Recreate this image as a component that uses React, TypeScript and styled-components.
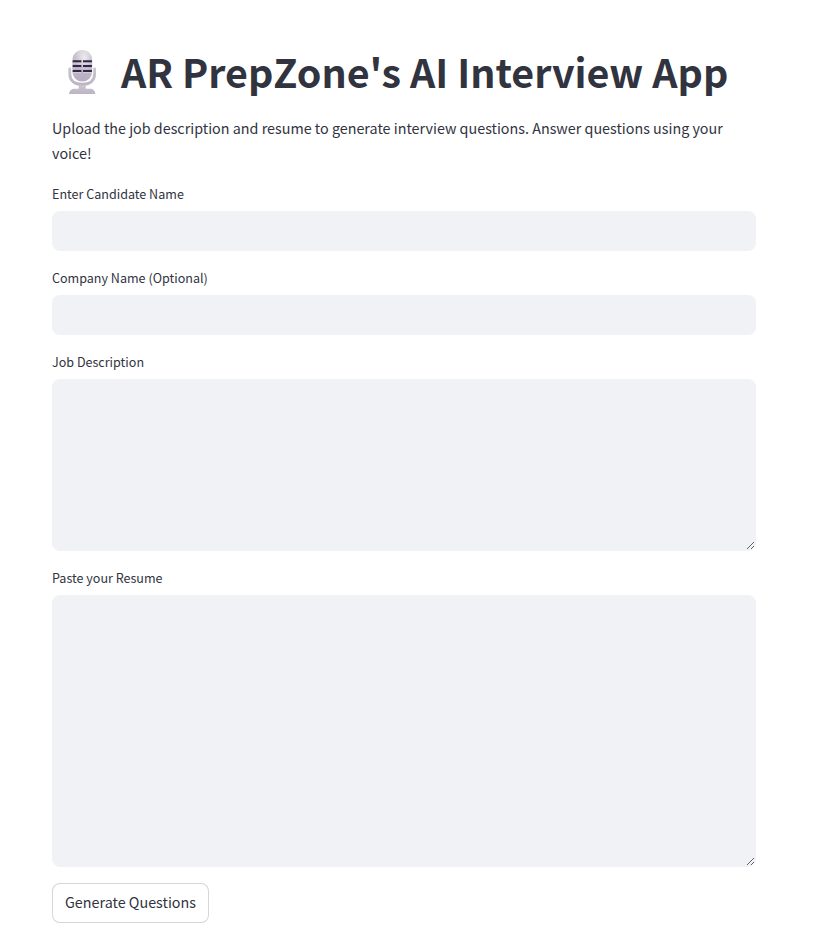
import React from 'react';
import styled, { createGlobalStyle } from 'styled-components';

const GlobalStyle = createGlobalStyle`
  * { box-sizing: border-box; }
  body {
    margin: 0;
    background: #fff;
    color: #31333f;
    font-family: "Noto Sans CJK SC", "Noto Sans", sans-serif;
  }
`;

const Page = styled.main`
  display: flex;
  flex-direction: column;
  align-items: flex-start;
  gap: 16px;
  width: 704px;
  height: 936px;
  margin-left: 52px;
  padding-top: 48px;
  overflow: hidden;
`;

const Title = styled.h1`
  display: flex;
  height: 51px;
  margin: 0;
  font-size: 39.42px;
  font-weight: 700;
  line-height: 46px;
  white-space: nowrap;
`;

const Microphone = styled.svg`
  flex: none;
  width: 60px;
  height: 48px;
  margin-right: 9px;
`;

const Intro = styled.p`
  height: 52px;
  margin: 0;
  font-size: 14.34px;
  line-height: 25px;
`;

const Field = styled.label`
  display: flex;
  flex-direction: column;
  gap: 4px;
  width: 100%;
`;

const Caption = styled.span`
  height: 24px;
  font-size: 12.55px;
  line-height: 22px;
`;

const TextInput = styled.input`
  height: 40px;
  padding: 0 12px;
  border: 0;
  border-radius: 8px;
  outline: 0;
  background: #f0f2f6;
  color: inherit;
  font: inherit;
`;

const TextArea = styled.textarea<{ $height: number }>`
  display: block;
  height: ${({ $height }) => $height}px;
  padding: 12px;
  border: 1px solid #f0f2f6;
  border-radius: 8px;
  outline: 0;
  background: #f0f2f6;
  color: inherit;
  font: inherit;
  resize: vertical;
`;

const Button = styled.button`
  width: 157px;
  height: 40px;
  padding: 0 0 3px;
  border: 1px solid rgba(49, 51, 63, 0.2);
  border-radius: 8px;
  background: #fff;
  color: inherit;
  font-family: inherit;
  font-size: 14.34px;
  line-height: 25px;
`;

const MicrophoneIcon = () => (
  <Microphone viewBox="0 0 60 48" aria-hidden="true">
    <defs>
      <linearGradient id="capsule" x1="0" y1="0" x2="0" y2="1">
        <stop offset="0" stopColor="#cfccd3" />
        <stop offset="0.5" stopColor="#bbb5c2" />
        <stop offset="1" stopColor="#b9aec3" />
      </linearGradient>
      <radialGradient id="shine" cx="0.6" cy="0.25" r="0.45">
        <stop offset="0" stopColor="#f2f1f3" stopOpacity="0.9" />
        <stop offset="1" stopColor="#f2f1f3" stopOpacity="0" />
      </radialGradient>
      <linearGradient id="stand" x1="0" y1="0" x2="0" y2="1">
        <stop offset="0" stopColor="#c9c6cc" />
        <stop offset="1" stopColor="#bdb3c6" />
      </linearGradient>
    </defs>
    <path d="M17.8 21v4.8c0 7.2 5.2 10.5 12.4 10.5s12.4-3.3 12.4-10.5V21" fill="none" stroke="url(#stand)" strokeWidth="2.9" strokeLinecap="round" />
    <path d="M26.7 37h7v3.7h4.5c3 0 4.9 2 5.2 5.3H17c.3-3.3 2.2-5.3 5.2-5.3h4.5z" fill="url(#stand)" />
    <rect x="20.4" y="2" width="19.8" height="31.5" rx="9.7" fill="url(#capsule)" />
    <rect x="20.4" y="2" width="19.8" height="31.5" rx="9.7" fill="url(#shine)" />
    <path d="M20.7 13.3h8.7M31 13.3h8.9M20.7 18.1h8.7M31 18.1h8.9M20.7 23h8.7M31 23h8.9" stroke="#35254a" strokeWidth="2.2" />
    <path d="M20.7 15h8.7M31 15h8.9M20.7 19.8h8.7M31 19.8h8.9M20.7 24.7h8.7M31 24.7h8.9" stroke="#e0dee3" strokeWidth="0.7" />
  </Microphone>
);

export default function App() {
  return (
    <>
      <GlobalStyle />
      <Page>
        <Title>
          <MicrophoneIcon />
          AR PrepZone's AI Interview App
        </Title>
        <Intro>
          Upload the job description and resume to generate interview questions. Answer questions using your voice!
        </Intro>
        <Field>
          <Caption>Enter Candidate Name</Caption>
          <TextInput />
        </Field>
        <Field>
          <Caption>Company Name (Optional)</Caption>
          <TextInput />
        </Field>
        <Field>
          <Caption>Job Description</Caption>
          <TextArea $height={172} />
        </Field>
        <Field>
          <Caption>Paste your Resume</Caption>
          <TextArea $height={272} />
        </Field>
        <Button type="button">Generate Questions</Button>
      </Page>
    </>
  );
}
